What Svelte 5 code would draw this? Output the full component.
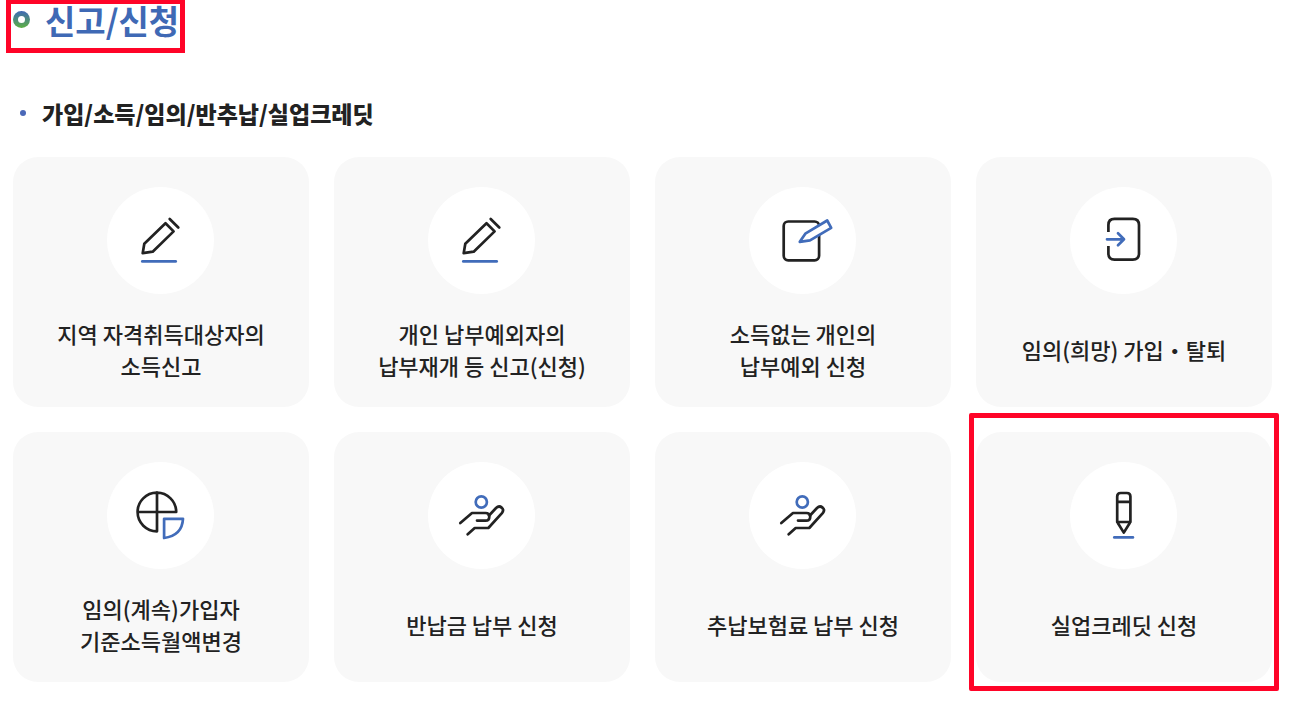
<script lang="ts">
  type Service = {
    icon: 'pencil' | 'note' | 'enter' | 'pie' | 'hand' | 'marker';
    lines: string[];
    marked?: boolean;
  };

  const services: Service[] = [
    { icon: 'pencil', lines: ['지역 자격취득대상자의', '소득신고'] },
    { icon: 'pencil', lines: ['개인 납부예외자의', '납부재개 등 신고(신청)'] },
    { icon: 'note', lines: ['소득없는 개인의', '납부예외 신청'] },
    { icon: 'enter', lines: ['임의(희망) 가입・탈퇴'] },
    { icon: 'pie', lines: ['임의(계속)가입자', '기준소득월액변경'] },
    { icon: 'hand', lines: ['반납금 납부 신청'] },
    { icon: 'hand', lines: ['추납보험료 납부 신청'] },
    { icon: 'marker', lines: ['실업크레딧 신청'], marked: true }
  ];
</script>

<main>
  <h1><span class="ring"></span>신고/신청</h1>

  <section>
    <h2>가입/소득/임의/반추납/실업크레딧</h2>
    <ul class="services">
      {#each services as service}
        <li class:marked={service.marked}>
          <a href="#apply">
            <span class="icon">
              <svg viewBox="0 0 107 107" aria-hidden="true">
                {#if service.icon === 'pencil'}
                  <path d="M35.7 66.2 37.3 56.7 58.5 36.3 66.6 44.4 45.7 64.7Z" />
                  <path d="M62.7 32 71.3 40.5" />
                  <path class="blue" d="M35.3 74.4H68.7" />
                {:else if service.icon === 'note'}
                  <rect x="34.7" y="34.5" width="35.4" height="38.8" rx="4.5" />
                  <path class="blue filled" d="M50.8 54.8 56.3 46.7 78.2 33.5 82.2 40.9 61 53.4Z" />
                {:else if service.icon === 'enter'}
                  <path class="flat" d="M38.4 45V38Q38.4 31.9 44.5 31.9H62.8Q69 31.9 69 38V66.4Q69 72.6 62.8 72.6H44.5Q38.4 72.6 38.4 66.4V59" />
                  <path class="blue" d="M37 52.3H53.5M48 46.3 54 52.3 48 58.3" />
                {:else if service.icon === 'pie'}
                  <path d="M50 69.3A19.3 19.3 0 1 1 69.2 50H30.7M50 30.7V69.3" />
                  <path class="blue" d="M57.1 56.8H76Q75.2 73.5 57.1 76Z" />
                {:else if service.icon === 'hand'}
                  <circle class="blue" cx="53.3" cy="40" r="5.6" />
                  <path d="M32.3 61 44 51H57.5Q61.3 51 61.3 54.4Q61.3 58.6 57.5 58.6H49" />
                  <path d="M61 53.5 68 46C71.8 42.4 77.2 46.8 73.8 51.2L60.3 66H46.7L39.7 72.3" />
                {:else}
                  <path d="M47.2 60V34.5Q47.2 31 50.7 31H56.9Q60.4 31 60.4 34.5V60L53.8 70.6ZM47.2 39.8H60.4M47.2 60H60.4" />
                  <path class="blue" d="M44.3 75.4H62.9" />
                {/if}
              </svg>
            </span>
            <span class="label">
              {#each service.lines as line}
                <span>{line}</span>
              {/each}
            </span>
          </a>
        </li>
      {/each}
    </ul>
  </section>
</main>

<style>
  :global(body) {
    background: #fff;
    color: #222;
    font-family: 'Noto Sans CJK KR', sans-serif;
  }

  main {
    padding: 0 19px 20px 13px;
  }

  h1 {
    display: flex;
    align-items: flex-start;
    gap: 15px;
    width: fit-content;
    margin: 0 0 43px -7px;
    padding: 0 1px 12px 2px;
    border: 5px solid #ff0428;
    border-top-width: 4px;
    color: #3f69b5;
    font-size: 33px;
    font-weight: 700;
    line-height: 32px;
  }

  .ring {
    width: 7px;
    height: 7px;
    margin-top: 7px;
    border-radius: 50%;
    border: 5px solid transparent;
    background:
      linear-gradient(#fff, #fff) padding-box,
      linear-gradient(#3f69b5, #5db043) border-box;
  }

  h2 {
    display: flex;
    align-items: center;
    gap: 16px;
    margin: 0 0 27px;
    padding-left: 7px;
    font-size: 23px;
    font-weight: 900;
    line-height: 34px;
  }

  h2::before {
    content: '';
    width: 6px;
    height: 6px;
    border-radius: 50%;
    background: #4a68b8;
  }

  .services {
    display: grid;
    grid-template-columns: repeat(4, 1fr);
    gap: 25px;
    margin: 0;
    padding: 0;
    list-style: none;
  }

  li {
    position: relative;
    min-height: 250px;
    display: flex;
  }

  .marked::after {
    content: '';
    position: absolute;
    inset: -19px -7px -9px;
    border: 5px solid #ff0428;
    border-radius: 2px;
    pointer-events: none;
  }

  a {
    flex: 1;
    display: flex;
    flex-direction: column;
    align-items: center;
    padding: 30px 0 4px;
    border-radius: 25px;
    background: #f8f8f8;
    color: inherit;
    text-decoration: none;
  }

  .icon {
    width: 107px;
    height: 107px;
    margin-right: 1px;
    border-radius: 50%;
    background: #fff;
  }

  svg {
    display: block;
    fill: none;
    stroke: #222;
    stroke-width: 2.7;
    stroke-linecap: round;
    stroke-linejoin: round;
  }

  .blue {
    stroke: #416cba;
  }

  .filled {
    fill: #fff;
  }

  .flat {
    stroke-linecap: butt;
  }

  .label {
    flex: 1;
    display: flex;
    flex-direction: column;
    justify-content: center;
    font-size: 22px;
    font-weight: 500;
    line-height: 32px;
    text-align: center;
  }
</style>
